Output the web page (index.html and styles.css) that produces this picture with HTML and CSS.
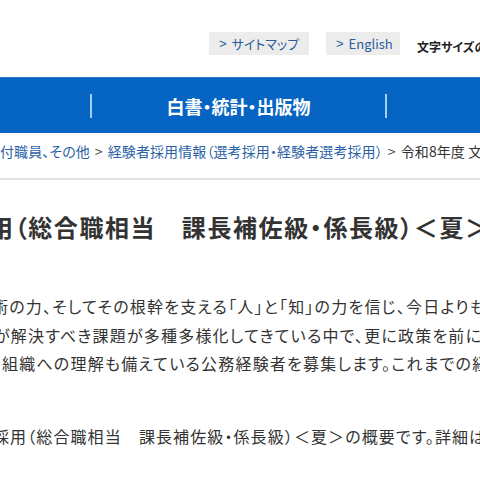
FILE: index.html
```html
<!DOCTYPE html>
<html lang="ja">
<head>
<meta charset="utf-8">
<title>令和8年度 文部科学省 経験者採用</title>
<link rel="stylesheet" href="styles.css">
</head>
<body>
<header class="header">
  <div class="tools">
    <a class="tool-btn tool-sitemap" href="#"><span class="chev">&gt;</span>サイトマップ</a>
    <a class="tool-btn tool-en" href="#"><span class="chev">&gt;</span>English</a>
    <span class="fontsize">文字サイズの変更</span>
  </div>
  <nav class="gnav">
    <ul class="gnav-list">
      <li class="gnav-item">政策・審議会</li>
      <li class="gnav-item">白書・統計・出版物</li>
      <li class="gnav-item">申請・手続き</li>
    </ul>
  </nav>
</header>

<div class="breadcrumb">
  <span class="cut"><span>ホーム &gt; 文部科学省の紹介 &gt; 採用・人事情報 &gt; 採用情報：総合職、一般職、専門職、任期</span></span><a href="#">付職員、その他</a><span class="sep">&gt;</span><a href="#">経験者採用情報（選考採用・経験者選考採用）</a><span class="sep">&gt;</span><span class="current">令和8年度 文部科学省 経験者採用（総合職相当　課長補佐級・係長級）＜夏＞</span>
</div>

<main class="main">
  <h1 class="title"><span class="cut"><span>令和8年度 文部科学省 経験者採</span></span><span class="t-shift">用（総合職相当　課長補佐級・係長級）＜夏＞</span></h1>

  <p class="lead">
    <span class="line l1"><span class="cut"><span>文部科学省は、教育、科学技術・学術、スポーツ、文化芸</span></span><span class="s1">術の力、そしてその根幹を支える「人」と「知」の力を信じ、今日よりも明日はもっと良くなると</span></span>
    <span class="line l2"><span class="cut"><span>思える社会の実現に向けて取り組んでいます。社会の変化に伴い、我が国</span></span><span class="s2">が解決すべき課題が多種多様化してきている中で、更に政策を前に進めるため、</span></span>
    <span class="line l3"><span class="cut"><span>多様な経験や専門性を持ち、行政</span></span><span class="s3">組織への理解も備えている公務経験者を募集します。これまでの経験を</span></span>
  </p>

  <p class="summary"><span class="cut"><span>以下は、令和8年度 文部科学省 経験者</span></span><span class="s4">採用（総合職相当　課長補佐級・係長級）＜夏＞の概要です。詳細は募集要項をご確認ください。</span></p>
</main>
</body>
</html>
```

FILE: styles.css
```css
html, body {
  margin: 0;
  padding: 0;
  overflow: hidden;
  background: #fff;
}
body {
  font-family: "Noto Sans CJK JP", "Noto Sans", sans-serif;
  font-feature-settings: "palt";
  color: #333;
}
a { text-decoration: none; }

.cut {
  display: inline-flex;
  width: 0;
  justify-content: flex-end;
  white-space: nowrap;
}

/* header tools */
.tools {
  display: flex;
  align-items: center;
  padding: 32px 0 0 209px;
  height: 23px;
  white-space: nowrap;
}
.tool-btn {
  flex-shrink: 0;
  display: flex;
  align-items: center;
  height: 23px;
  background: #ececec;
  color: #2a5d9a;
  font-size: 13px;
  box-sizing: border-box;
  padding-left: 10px;
}
.tool-sitemap { width: 100px; }
.tool-en { width: 74px; margin-left: 17px; }
.chev {
  font-family: "Liberation Sans", sans-serif;
  margin-right: 5px;
  color: #2a5d9a;
}
.fontsize {
  flex-shrink: 0;
  margin-left: 17px;
  font-size: 12px;
  font-weight: bold;
  color: #222;
  padding-top: 5px;
}

/* global nav */
.gnav {
  margin-top: 22px;
  height: 56px;
  background: #0665c2;
  border-top: 1px solid #2a78c8;
  box-sizing: border-box;
  display: flex;
  align-items: center;
}
.gnav-list {
  list-style: none;
  margin: 0 0 0 -205px;
  padding: 0;
  display: flex;
}
.gnav-item {
  flex-shrink: 0;
  width: 295px;
  height: 24px;
  line-height: 24px;
  text-align: center;
  color: #fff;
  font-size: 18px;
  font-weight: bold;
  border-left: 2px solid #9fd0f5;
  box-sizing: border-box;
  white-space: nowrap;
}
.gnav-item:first-child { border-left: none; color: transparent; }
.gnav-item:last-child { color: transparent; }

/* breadcrumb */
.breadcrumb {
  padding: 8px 0 17px 0;
  font-size: 14px;
  line-height: 20px;
  white-space: nowrap;
  border-bottom: 2px solid #e4e4e4;
  color: #333;
  letter-spacing: 0.1px;
}
.breadcrumb a { color: #2b62a6; }
.breadcrumb .sep {
  display: inline-block;
  margin: 0 5px;
  color: #444;
}

/* main */
.main { white-space: nowrap; }
.title {
  margin: 30px 0 0 0;
  font-size: 24px;
  line-height: 34px;
  font-weight: bold;
  color: #333;
  letter-spacing: 1.6px;
}
.t-shift { margin-left: -11px; }

.lead {
  margin: 48px 0 0 0;
  font-size: 16px;
  line-height: 28.5px;
  letter-spacing: 1.2px;
}
.line { display: block; }
.s1 { margin-left: -8px; }
.s2 { margin-left: -6px; }
.s3 { margin-left: 2px; }

.summary {
  margin: 44px 0 0 0;
  font-size: 16px;
  line-height: 28px;
  letter-spacing: 1.1px;
}
.s4 { margin-left: -7px; }
```
